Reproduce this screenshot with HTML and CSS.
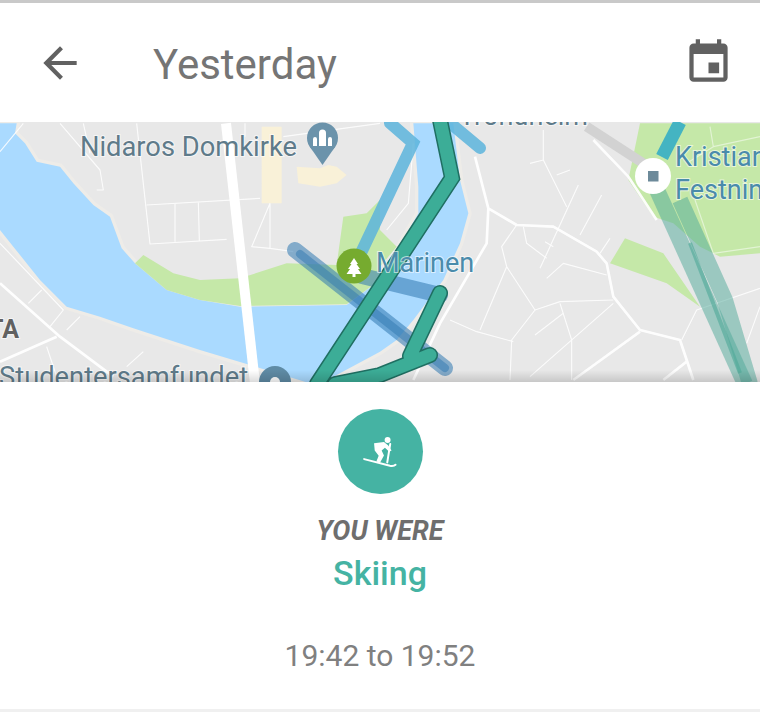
FILE: index.html
```html
<!DOCTYPE html>
<html lang="en">
<head>
    <meta charset="UTF-8">
    <meta name="viewport" content="width=device-width, initial-scale=1.0">
    <title>Yesterday</title>
    <link rel="stylesheet" href="styles.css">
</head>
<body>

<div class="screen">
    <!--Top bar-->
    <header class="topbar">
        <svg class="back-icon" viewBox="0 0 24 24"><path d="M20 11H7.83l5.59-5.59L12 4l-8 8 8 8 1.41-1.41L7.83 13H20v-2z"/></svg>
        <h1>Yesterday</h1>
        <svg class="calendar-icon" viewBox="0 0 24 24"><path d="M17 12h-5v5h5v-5zM16 1v2H8V1H6v2H5c-1.11 0-1.99.9-1.99 2L3 19c0 1.1.89 2 2 2h14c1.1 0 2-.9 2-2V5c0-1.1-.9-2-2-2h-1V1h-2zm3 18H5V8h14v11z"/></svg>
    </header>

    <!--Map-->
    <svg class="map" viewBox="0 122 760 260">
        <defs>
            <linearGradient id="map-shade" x1="0" y1="0" x2="0" y2="1">
                <stop offset="0" stop-color="#000" stop-opacity="0"/>
                <stop offset="1" stop-color="#000" stop-opacity="0.14"/>
            </linearGradient>
        </defs>
        <rect x="0" y="122" width="760" height="260" fill="#e8e8e8"/>

        <!--left half, drawn in zoomed units-->
        <g transform="translate(0 120) scale(.33333)">
            <path class="water" d="M0 10H50L45 40L75 70L110 125L180 140L220 190L280 255L330 290L365 385L405 430L500 510L600 540L720 560L1040 555L1140 480L1255 280L1255 200L1240 10H1360L1380 180L1405 280L1380 370L1330 480L1240 600L1190 660L1140 695L1000 770L930 790L750 735L600 690L400 625L300 590L200 560L120 480L40 380L0 330Z"/>
            <path class="park" d="M405 430L430 405L520 460L600 480L720 475L860 430L1010 435L1030 290L1100 280L1140 240V480L1040 553L720 558L600 540L500 510Z"/>
            <path class="building" d="M785 20H845V250H785ZM890 140L960 145L985 135L1010 140L1040 165L1010 190L960 200L895 190Z"/>
            <g class="road thin">
                <path d="M410 10L450 372L680 358M440 255L780 235M525 250V365M595 245L598 362"/>
                <path d="M180 10L300 150L310 210L290 210M70 10L0 95M250 10L270 100M735 10V50M1140 10L850 50"/>
                <path d="M810 250L755 380L810 385L880 395M810 250V385"/>
                <path d="M0 370L190 570L150 620M85 550L125 510M140 680L170 770M380 740L430 695M240 590L200 630"/>
            </g>
            <g class="road mid">
                <path d="M0 490L180 650L340 770M0 725L170 650"/>
            </g>
            <path class="road wide" d="M678 10L765 790"/>
        </g>

        <!--right half, drawn in zoomed units-->
        <g transform="translate(380 120) scale(.33333)">
            <path class="park" d="M0 330L50 380L0 440ZM780 10H1140V400L1020 410L960 380L880 310L820 290L745 180ZM690 430L735 355L850 400L960 560L860 490Z"/>
            <path class="gray-road" d="M620 20L790 130"/>
            <g class="road thin">
                <path d="M100 70L85 250L20 330M410 315L365 380L380 440L465 570L395 660L390 780M210 600L290 635L400 665"/>
                <path d="M465 570L540 545L700 540M540 550L575 660V780M700 550L450 770M380 440L300 630"/>
                <path d="M595 195L480 445M665 225L600 345M490 30V120L560 260M450 130L490 120M530 165L570 150"/>
                <path d="M430 320L440 370L500 415M495 365L520 380M500 475L550 430L680 465M690 355L660 400M465 645L550 580"/>
                <path d="M905 660L950 570L1140 505M1100 670L1140 560"/>
            </g>
            <g class="road thin faint">
                <path d="M990 20L1000 80L920 130M945 240L1000 400L1140 380M1000 80L1140 50"/>
            </g>
            <g class="road mid">
                <path d="M285 110L325 265L320 370L180 610L100 780M325 265L410 315L520 320L650 395L680 430L700 530L780 630L900 660L940 780"/>
                <path d="M640 60L745 170L830 300M780 635L580 780M920 725L850 780"/>
            </g>
        </g>

        <!--routes-->
        <path class="route-light" d="M390 123L413 143L360 255M450 123L480 148"/>
        <path class="route-dark" d="M295 250L445 368M362 276L440 295"/>
        <path class="route-dark-core" d="M300 254L445 368"/>
        <path class="route-far-top" d="M680 122L662 157"/>
        <path class="route-far" d="M657 190L745 384"/>
        <path class="route-far" d="M680 200L725 300L750 384"/>
        <path class="route-far-core" d="M690 243L740 373"/>
        <path class="route-edge" d="M440 120L452 178L317 384M440 293L410 356M430 355L380 375L335 384"/>
        <path class="route-main" d="M440 120L452 178L317 384M440 293L410 356M430 355L380 375L335 384"/>

        <!--pins-->
        <circle cx="322.500" cy="138" r="15.500" fill="#6b93ab"/>
        <path d="M310 147L322.500 165L335 147Z" fill="#6b93ab"/>
        <path d="M313 146V139a2 2 0 0 1 4 0V146ZM319 146V133a3.500 3.500 0 0 1 7 0V146ZM328 146V139a2 2 0 0 1 4 0V146Z" fill="#fff"/>
        <circle cx="354" cy="266" r="17.500" fill="#76ab2f"/>
        <path d="M354 258L358 264H356.500L360 269H358L361.500 274H355.500V277H352.500V274H346.500L350 269H348L351.500 264H350Z" fill="#fff"/>
        <circle cx="275" cy="382" r="16" fill="#5f8ba5"/>
        <circle cx="275" cy="382" r="5" fill="#fff"/>
        <circle cx="653" cy="176" r="18" fill="#fff"/>
        <rect x="648" y="171" width="10.500" height="10.500" fill="#6d8a9a"/>

        <!--labels-->
        <text class="label" x="80" y="156" font-size="27.300">Nidaros Domkirke</text>
        <text class="label" x="-1" y="386" font-size="27.300">Studentersamfundet</text>
        <text class="label" x="459" y="125" font-size="27">Trondheim</text>
        <text class="label blue" x="376" y="272" font-size="27">Marinen</text>
        <text class="label blue" x="675" y="166" font-size="27">Kristiansten</text>
        <text class="label blue" x="675" y="199" font-size="27">Festning</text>
        <text class="label bold" x="-12" y="338" font-size="25">TA</text>

        <rect x="0" y="370" width="760" height="12" fill="url(#map-shade)"/>
    </svg>

    <!--Activity-->
    <section class="activity">
        <div class="activity-badge">
            <svg viewBox="240 100 120 106">
                <circle cx="323" cy="118" r="9"/>
                <path d="M282 128L312 124L325 135L335 150L328 154L315 142L305 150L312 165L300 187L289 183L296 166L284 150Z"/>
                <path class="ski-line" d="M331 130L322 186"/>
                <path class="ski-line" d="M252 176L330 196Q342 198 347 193"/>
            </svg>
        </div>
        <div class="activity-label">YOU WERE</div>
        <div class="activity-name">Skiing</div>
        <div class="activity-time">19:42 to 19:52</div>
    </section>
</div>

</body>
</html>
```

FILE: styles.css
```css
body {
    font-family: Roboto, "Liberation Sans", sans-serif;
    background-color: #fff;
    margin: 0;
    overflow: hidden;
}

.screen {
    width: 760px;
    height: 717px;
    display: flex;
    flex-direction: column;
}

.topbar {
    height: 119px;
    border-top: 3px solid #c9c9c9;
    display: flex;
    align-items: center;
    padding: 0 26px 0 35px;
}

.topbar svg {
    fill: #616161;
    flex: none;
}

.back-icon {
    width: 50px;
    height: 50px;
}

.calendar-icon {
    width: 51px;
    height: 51px;
}

.topbar h1 {
    flex: 1;
    margin: 0 0 0 68px;
    padding-top: 4px;
    font-size: 42px;
    font-weight: 400;
    color: #757575;
}

.map {
    display: block;
    width: 760px;
    height: 260px;
    flex: none;
}

.water {
    fill: #aadaff;
    stroke: #eeece8;
    stroke-width: 20;
    paint-order: stroke;
}

.park {
    fill: #c5e8a8;
}

.building {
    fill: #f9f1d8;
}

.road {
    fill: none;
    stroke: #fff;
    stroke-linejoin: round;
}

.road.thin {
    stroke-width: 3.5;
    opacity: 0.85;
}

.road.faint {
    opacity: 0.5;
}

.road.mid {
    stroke-width: 8;
    opacity: 0.95;
}

.road.wide {
    stroke-width: 30;
}

.gray-road {
    fill: none;
    stroke: #d2d2d2;
    stroke-width: 30;
}

.route-light, .route-dark, .route-dark-core, .route-far, .route-far-core, .route-far-top, .route-edge, .route-main {
    fill: none;
    stroke-linecap: round;
    stroke-linejoin: miter;
}

.route-light {
    stroke: #5cb4dc;
    stroke-width: 12;
    opacity: 0.85;
}

.route-dark {
    stroke: #2f78b0;
    stroke-width: 16;
    opacity: 0.55;
}

.route-dark-core {
    stroke: #2f78b0;
    stroke-width: 8;
    opacity: 0.5;
}

.route-far-top {
    stroke: #35aec4;
    stroke-width: 13;
    stroke-linecap: butt;
    opacity: 0.9;
}

.route-far {
    stroke: #4ea898;
    stroke-width: 16;
    stroke-linecap: butt;
    opacity: 0.5;
}

.route-far-core {
    stroke: #4ea898;
    stroke-width: 4;
    stroke-linecap: butt;
    opacity: 0.6;
}

.route-edge {
    stroke: #1f6f62;
    stroke-width: 16;
}

.route-main {
    stroke: #3cad97;
    stroke-width: 13;
}

.label {
    font-family: Roboto, sans-serif;
    fill: #5f7b8a;
    stroke: #fff;
    stroke-width: 2;
    stroke-opacity: 0.6;
    paint-order: stroke;
}

.label.blue {
    fill: #4a8bab;
}

.label.bold {
    font-weight: 700;
    fill: #616161;
}

.activity {
    flex: 1;
    display: flex;
    flex-direction: column;
    align-items: center;
    padding-top: 27px;
    border-bottom: 3px solid #f0f0f0;
    margin-bottom: 5px;
}

.activity-badge {
    width: 85px;
    height: 85px;
    border-radius: 50%;
    background-color: #45b3a3;
    display: flex;
    align-items: center;
    justify-content: center;
}

.activity-badge svg {
    width: 40px;
    height: 35px;
    fill: #fff;
}

.ski-line {
    fill: none;
    stroke: #fff;
    stroke-width: 6;
    stroke-linecap: round;
}

.activity-label {
    margin-top: 21px;
    font-size: 27px;
    font-weight: 700;
    font-style: italic;
    color: #6e6e6e;
}

.activity-name {
    margin-top: 6px;
    font-size: 34px;
    font-weight: 500;
    color: #45b3a3;
}

.activity-time {
    margin-top: 45px;
    font-size: 30px;
    color: #808080;
}
```
